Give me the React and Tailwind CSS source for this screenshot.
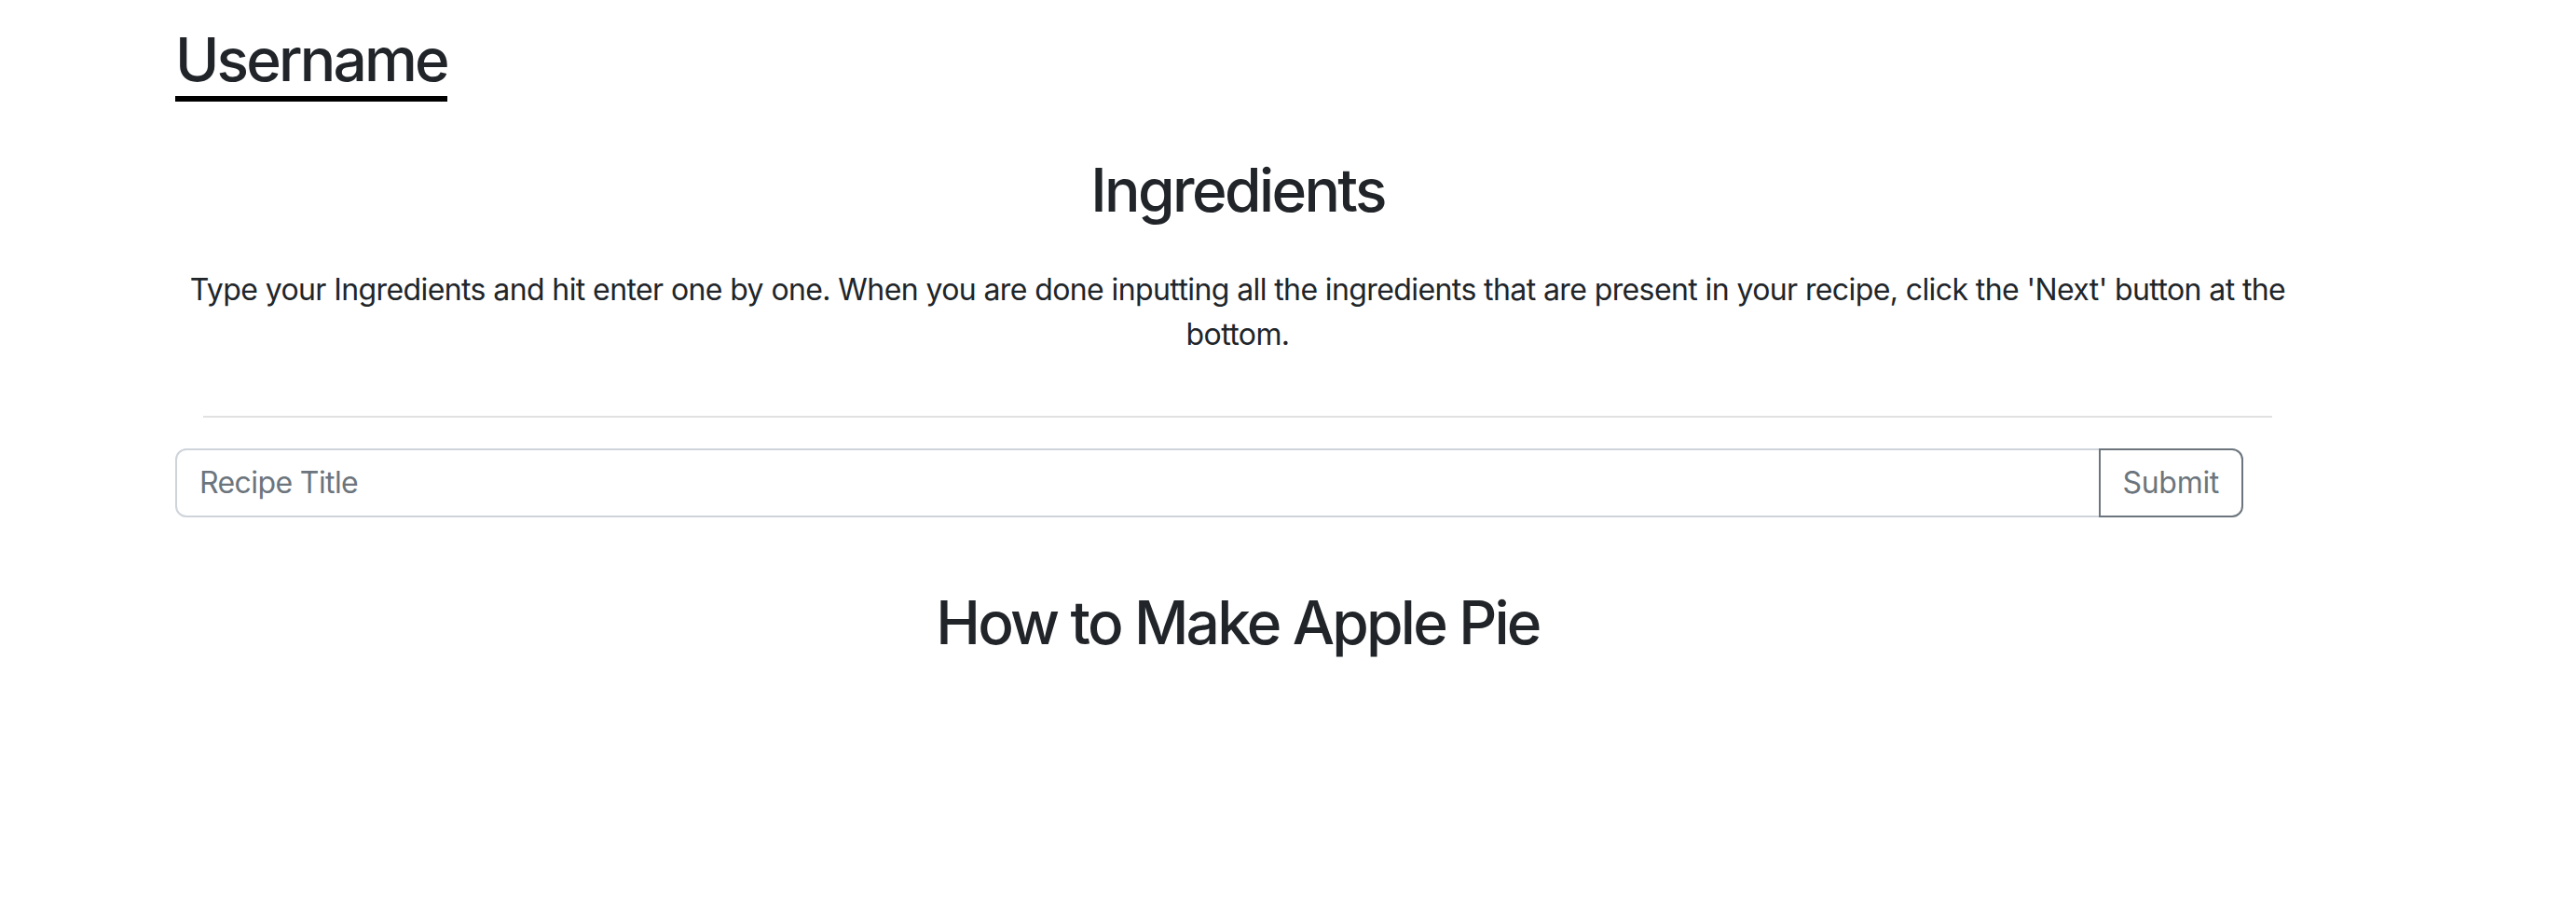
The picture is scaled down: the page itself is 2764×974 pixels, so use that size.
import React, { useState } from 'react';

const App = () => {
    const [title, setTitle] = useState('');

    return (
        <div className="min-h-screen bg-white text-[#212529] font-['Inter','Liberation_Sans',sans-serif]">
            <div className="w-[2280px] ml-[188px] pt-[26px]">
                {/* Header */}
                <div>
                    <span className="inline-block text-[64px] leading-[1.2] font-medium tracking-[-2.8px] border-b-[6px] border-black">
                        Username
                    </span>
                </div>

                {/* Ingredients intro */}
                <div className="text-center px-[12px]">
                    <h2 className="mt-[57px] text-[64px] leading-[1.2] font-medium tracking-[-2.6px]">Ingredients</h2>
                    <p className="mt-[44px] text-[32px] leading-[48px] tracking-[-0.6px]">
                        Type your Ingredients and hit enter one by one. When you are done inputting all the ingredients that are present in your recipe, click the 'Next' button at the bottom.
                    </p>
                </div>

                <hr className="mx-[30px] mt-[63px] border-0 h-[2px] bg-[#e1e1e1]" />

                {/* Recipe title input */}
                <div className="flex w-[2219px] mt-[33px]">
                    <input
                        type="text"
                        placeholder="Recipe Title"
                        value={title}
                        onChange={(e) => setTitle(e.target.value)}
                        className="flex-1 min-w-0 h-[74px] px-[24px] text-[32px] leading-[48px] tracking-[-0.6px] border-2 border-[#ced4da] rounded-l-[12px] placeholder:text-[#6c757d] outline-none"
                    />
                    <button className="relative -ml-[2px] h-[74px] px-[24px] text-[32px] leading-[48px] tracking-[-0.3px] text-[#6c757d] border-2 border-[#6c757d] rounded-r-[12px] bg-white">
                        Submit
                    </button>
                </div>

                {/* Recipe heading */}
                <h2 className="mt-[75px] text-center text-[64px] leading-[1.2] font-medium tracking-[-2.8px]">How to Make Apple Pie</h2>
            </div>
        </div>
    );
};

export default App;
